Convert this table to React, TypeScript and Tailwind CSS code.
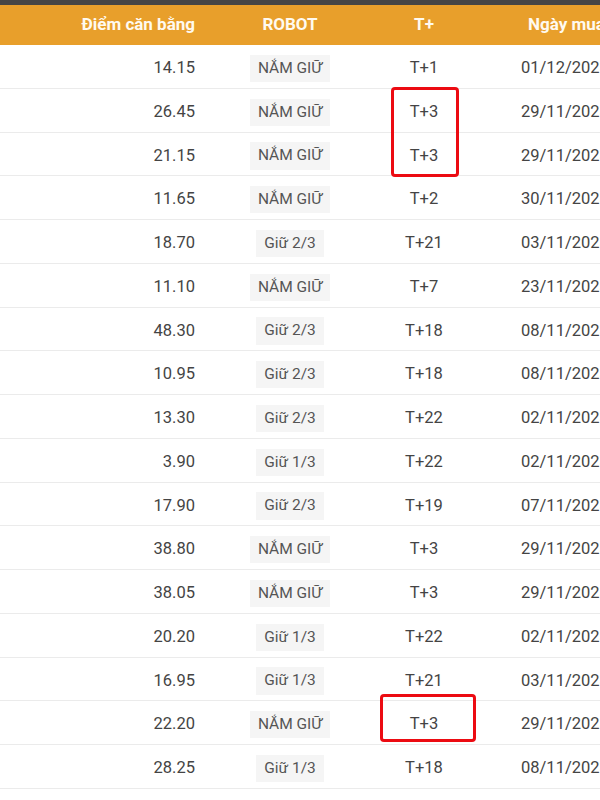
import React from 'react';

type Row = { price: string; robot: string; t: string; date: string };

const rows: Row[] = [
    { price: '14.15', robot: 'NẮM GIỮ', t: 'T+1', date: '01/12/2023' },
    { price: '26.45', robot: 'NẮM GIỮ', t: 'T+3', date: '29/11/2023' },
    { price: '21.15', robot: 'NẮM GIỮ', t: 'T+3', date: '29/11/2023' },
    { price: '11.65', robot: 'NẮM GIỮ', t: 'T+2', date: '30/11/2023' },
    { price: '18.70', robot: 'Giữ 2/3', t: 'T+21', date: '03/11/2023' },
    { price: '11.10', robot: 'NẮM GIỮ', t: 'T+7', date: '23/11/2023' },
    { price: '48.30', robot: 'Giữ 2/3', t: 'T+18', date: '08/11/2023' },
    { price: '10.95', robot: 'Giữ 2/3', t: 'T+18', date: '08/11/2023' },
    { price: '13.30', robot: 'Giữ 2/3', t: 'T+22', date: '02/11/2023' },
    { price: '3.90', robot: 'Giữ 1/3', t: 'T+22', date: '02/11/2023' },
    { price: '17.90', robot: 'Giữ 2/3', t: 'T+19', date: '07/11/2023' },
    { price: '38.80', robot: 'NẮM GIỮ', t: 'T+3', date: '29/11/2023' },
    { price: '38.05', robot: 'NẮM GIỮ', t: 'T+3', date: '29/11/2023' },
    { price: '20.20', robot: 'Giữ 1/3', t: 'T+22', date: '02/11/2023' },
    { price: '16.95', robot: 'Giữ 1/3', t: 'T+21', date: '03/11/2023' },
    { price: '22.20', robot: 'NẮM GIỮ', t: 'T+3', date: '29/11/2023' },
    { price: '28.25', robot: 'Giữ 1/3', t: 'T+18', date: '08/11/2023' },
];

const App: React.FC = () => {
    return (
        <div className="w-[600px] h-[800px] overflow-hidden bg-white font-['Roboto',sans-serif]">
            <div className="h-[5px] bg-[#454545]" />
            <div className="relative w-[660px]">
                {/* Header */}
                <div className="flex h-[40px] items-center bg-[#e89f2b] text-[17px] font-bold text-[#fffaf0]">
                    <div className="w-[215px] pr-[20px] text-right">Điểm căn bằng</div>
                    <div className="w-[150px] text-center">ROBOT</div>
                    <div className="w-[118px] text-center">T+</div>
                    <div className="w-[160px] pl-[45px]">Ngày mua</div>
                </div>

                {/* Rows */}
                {rows.map((row, index) => (
                    <div key={index} className="flex h-[43.75px] items-center border-b border-[#ebebeb] pt-[4px] text-[16.5px] text-[#444]">
                        <div className="w-[215px] pr-[20px] text-right">{row.price}</div>
                        <div className="flex w-[150px] justify-center">
                            <span className="bg-[#f5f5f5] px-[8px] py-[2px] text-[15.5px] text-[#555]">{row.robot}</span>
                        </div>
                        <div className="w-[118px] text-center">{row.t}</div>
                        <div className="w-[160px] pl-[38px]">{row.date}</div>
                    </div>
                ))}

                {/* highlight boxes */}
                <div className="absolute left-[391px] top-[82px] h-[90px] w-[68px] rounded-[4px] border-[3px] border-[#ec0b12]" />
                <div className="absolute left-[380px] top-[689px] h-[48px] w-[96px] rounded-[4px] border-[3px] border-[#ec0b12]" />
            </div>
        </div>
    );
};

export default App;
